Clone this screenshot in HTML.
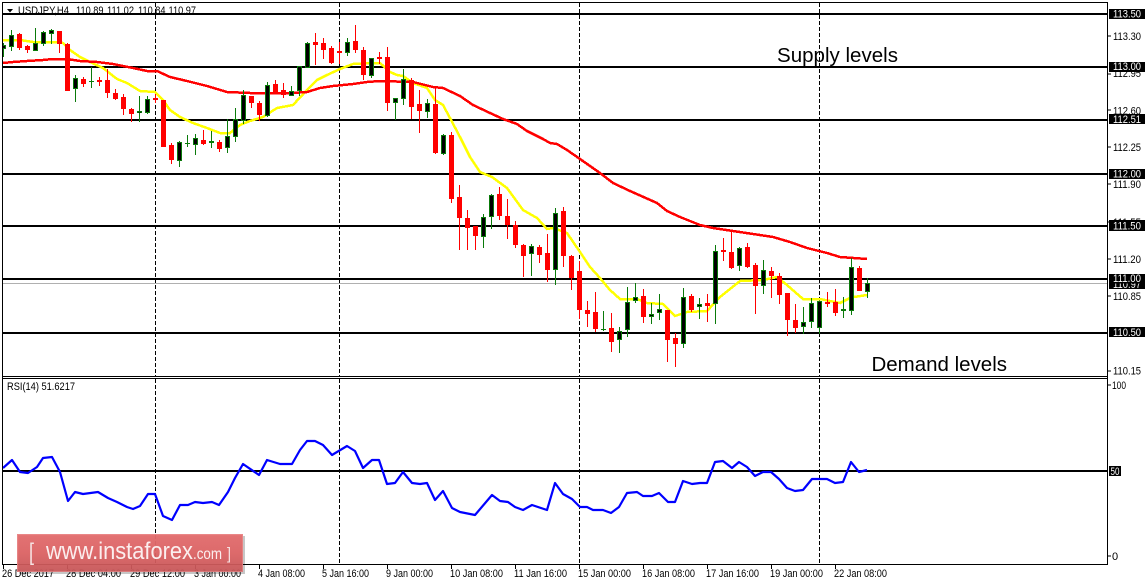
<!DOCTYPE html>
<html><head><meta charset="utf-8"><title>USDJPY,H4</title>
<style>
html,body{margin:0;padding:0;background:#fff;width:1147px;height:585px;overflow:hidden}
svg{display:block}
text{font-family:"Liberation Sans",sans-serif;fill:#000}
.a{font-size:11px}
.w{font-size:11px;fill:#fff}
</style></head><body>
<svg width="1147" height="585" viewBox="0 0 1147 585" xmlns="http://www.w3.org/2000/svg">
<defs>
<clipPath id="c"><rect x="3" y="3" width="1104" height="373"/></clipPath>
<linearGradient id="g" x1="0" y1="0" x2="0" y2="1"><stop offset="0" stop-color="#e46f70" stop-opacity=".96"/><stop offset=".5" stop-color="#de6465" stop-opacity=".94"/><stop offset="1" stop-color="#c95658" stop-opacity=".92"/></linearGradient>
</defs>
<rect width="1147" height="585" fill="#fff"/>

<!-- header -->
<path d="M7 9H13L10 12.5Z" fill="#000"/>
<text x="18" y="14" class="a" textLength="51" lengthAdjust="spacingAndGlyphs">USDJPY,H4</text>
<text x="76" y="14" class="a" textLength="27.5" lengthAdjust="spacingAndGlyphs">110.89</text>
<text x="107" y="14" class="a" textLength="27" lengthAdjust="spacingAndGlyphs">111.02</text>
<text x="138" y="14" class="a" textLength="27.5" lengthAdjust="spacingAndGlyphs">110.84</text>
<text x="168.500" y="14" class="a" textLength="27.500" lengthAdjust="spacingAndGlyphs">110.97</text>

<!-- grid dashes -->
<g shape-rendering="crispEdges">
<path d="M155.5 3V376M339.5 3V376M579.5 3V376M819.5 3V376M155.5 379V564M339.5 379V564M579.5 379V564M819.5 379V564" stroke="#000" stroke-width="1" stroke-dasharray="4 2" fill="none"/>
<!-- levels -->
<path d="M3 283.5H1107" stroke="#b0b0b0" stroke-width="1"/>
<path d="M3 14H1107M3 67H1107M3 120H1107M3 174H1107M3 226H1107M3 279H1107M3 333H1107M3 471H1107" stroke="#000" stroke-width="2"/>
</g>

<g clip-path="url(#c)" shape-rendering="crispEdges" fill="none">
<!-- MAs -->
<polyline stroke="#ffff00" stroke-width="2.5" points="3,40 20,40 33,42 60,42 63,43 70,50 80,57 90,62 103,68 117,79 127,83 140,91 155,92 163,100 170,110 180,117 193,123 207,128 220,133 230,133 240,125 250,121 263,117 277,108 293,105 307,90 317,80 327,75 340,69 353,64 370,63 380,63 390,72 397,75 403,76 413,83 427,88 435,100 443,105 450,118 460,137 470,157 480,172 492,177 507,188 523,210 537,218 547,229 553,228 567,233 580,252 590,267 600,278 610,290 620,299 637,299 647,303 663,304 675,316 687,312 707,311 720,297 730,289 740,281 763,280 777,277 787,285 803,299 820,299 840,303 850,298 854,297 867,295"/>
<polyline stroke="#ff0000" stroke-width="2.5" points="3,63 13,62 27,61 43,60 53,59 67,59 80,61 97,62 113,64 123,66 133,68 147,71 157,71 170,77 187,81 207,86 227,92 250,93 267,93 293,93 307,92 320,88 333,86 353,84 367,82 380,81 413,82 433,87 443,88 460,96 473,105 490,113 503,119 517,124 527,131 543,139 550,143 557,144 567,150 580,159 600,173 613,183 630,191 657,203 667,211 680,217 700,225 713,228 733,231 753,234 773,237 790,242 807,248 827,253 840,257 867,259"/>
<!-- red wicks -->
<path stroke="#ff0000" stroke-width="1" d="M19.5 33V50M27.5 45V53M59.5 31V53M67.5 43V91M83.5 77V87M99.5 77V86M107.5 69V98M115.5 89V100M123.5 94V115M131.5 108V122M155.5 94V103M163.5 100V147M171.5 143V164M203.5 130V145M219.5 140V152M251.5 96V108M259.5 101V121M275.5 80V94M283.5 83V98M315.5 33V65M323.5 38V59M331.5 46V64M339.5 42V64M355.5 25V53M363.5 47V80M379.5 52V64M387.5 47V111M411.5 78V119M419.5 90V133M435.5 87V154M451.5 132V203M459.5 185V250M467.5 210V250M475.5 226V250M499.5 187V220M507.5 199V239M515.5 221V248M523.5 244V277M539.5 245V263M547.5 234V282M563.5 207V267M571.5 255V290M579.5 261V319M587.5 301V327M595.5 292V332M611.5 313V352M643.5 289V323M667.5 310V362M675.5 333V367M691.5 294V312M707.5 294V322M723.5 238V261M731.5 230V269M747.5 243V268M755.5 263V314M771.5 267V298M779.5 273V304M787.5 293V336M795.5 304V333M827.5 292V307M835.5 289V316M859.5 266V291"/>
<!-- red bodies -->
<path stroke="#ff0000" stroke-width="5" d="M19.5 34V48M27.5 46V50M59.5 31V44M67.5 44V91M83.5 79V84M99.5 80V82M107.5 80V93M115.5 93V99M123.5 97V109M131.5 109V114M155.5 98V100M163.5 100V147M171.5 145V160M203.5 140V144M219.5 142V149M251.5 96V103M259.5 103V115M275.5 84V93M283.5 90V95M315.5 42V45M323.5 43V50M331.5 48V63M339.5 51V53M355.5 41V50M363.5 50V75M379.5 57V59M387.5 57V103M411.5 80V107M419.5 104V111M435.5 104V153M451.5 135V199M459.5 197V218M467.5 218V228M475.5 226V236M499.5 194V216M507.5 216V225M515.5 225V245M523.5 245V256M539.5 247V255M547.5 253V270M563.5 211V256M571.5 256V278M579.5 271V310M587.5 310V314M595.5 312V329M611.5 328V342M643.5 296V317M667.5 310V340M675.5 338V344M691.5 296V310M707.5 303V306M723.5 250V252M731.5 252V268M747.5 247V267M755.5 265V286M771.5 271V276M779.5 276V295M787.5 293V320M795.5 320V328M827.5 302V304M835.5 302V313M859.5 268V291"/>
<!-- green wicks -->
<path stroke="#0a7a0a" stroke-width="1" d="M3.5 43V57M11.5 30V51M35.5 28V51M43.5 31V46M51.5 29V44M75.5 75V102M91.5 67V88M139.5 96V122M147.5 96V114M179.5 141V167M187.5 135V147M195.5 134V155M211.5 131V148M227.5 119V153M235.5 108V142M243.5 90V124M267.5 82V117M291.5 86V96M299.5 66V96M307.5 42V68M347.5 38V56M371.5 58V78M395.5 98V120M403.5 69V105M427.5 99V118M443.5 134V155M483.5 214V248M491.5 194V229M531.5 244V276M555.5 208V285M603.5 311V331M619.5 327V353M627.5 287V337M635.5 283V303M651.5 303V324M659.5 294V320M683.5 288V348M699.5 298V319M715.5 245V324M739.5 247V271M763.5 260V294M803.5 307V334M811.5 298V328M819.5 301V334M843.5 297V318M851.5 258V315M867.5 278V298"/>
<!-- green body outlines -->
<path stroke="#0a7a0a" stroke-width="5" d="M3.5 45V49M11.5 35V47M35.5 43V51M43.5 32V44M51.5 30V34M75.5 78V89M91.5 81V82M139.5 111V113M147.5 99V113M179.5 142V161M187.5 143V144M195.5 138V145M211.5 141V143M227.5 136V148M235.5 119V137M243.5 95V121M267.5 85V116M291.5 91V96M299.5 66V91M307.5 43V68M347.5 42V53M371.5 58V76M395.5 98V103M403.5 79V99M427.5 103V112M443.5 135V154M483.5 217V237M491.5 195V217M531.5 246V254M555.5 213V270M603.5 329V330M619.5 331V340M627.5 302V330M635.5 297V301M651.5 314V317M659.5 309V313M683.5 297V344M699.5 304V307M715.5 251V304M739.5 248V266M763.5 270V286M803.5 322V327M811.5 303V322M819.5 301V328M843.5 309V311M851.5 267V311M867.5 283V292"/>
<!-- black body fill -->
<path stroke="#000" stroke-width="3" d="M3.5 46V48M11.5 36V46M35.5 44V50M43.5 33V43M51.5 31V33M75.5 79V88M139.5 112V112.5M147.5 100V112M179.5 143V160M195.5 139V144M227.5 137V147M235.5 120V136M243.5 96V120M267.5 86V115M291.5 92V95M299.5 67V90M307.5 44V67M347.5 43V52M371.5 59V75M395.5 99V102M403.5 80V98M427.5 104V111M443.5 136V153M483.5 218V236M491.5 196V216M531.5 247V253M555.5 214V269M619.5 332V339M627.5 303V329M635.5 298V300M651.5 315V316M659.5 310V312M683.5 298V343M699.5 305V306M715.5 252V303M739.5 249V265M763.5 271V285M803.5 323V326M811.5 304V321M819.5 302V327M851.5 268V310M867.5 284V291"/>
</g>

<!-- RSI -->
<polyline fill="none" stroke="#0000ff" stroke-width="2.2" stroke-linejoin="round" points="3,468 12,460 20,472 28,473 37,467 43,458 52,457 60,472 68,501 75,492 83,494 98,492 108,498 117,502 127,507 133,509 140,506 148,494 155,494 163,516 172,520 180,505 188,505 195,502 203,503 212,502 219,505 228,492 235,478 243,464 259,475 267,460 280,464 292,464 300,450 307,441 315,441 323,445 332,455 347,446 355,451 363,468 372,460 379,460 387,484 395,483 403,472 412,483 420,484 427,483 435,500 443,491 452,508 460,512 475,515 492,495 500,501 508,502 515,507 523,510 532,505 547,510 555,483 563,494 572,499 580,507 587,507 593,510 603,510 611,513 619,507 627,493 637,492 643,496 652,496 659,493 668,502 675,502 683,481 692,484 700,483 707,483 715,462 723,461 732,468 739,462 747,467 755,476 763,472 771,472 779,479 787,488 795,491 803,490 812,479 827,479 835,483 843,482 851,462 859,472 867,470"/>
<text x="7" y="390" class="a" textLength="68" lengthAdjust="spacingAndGlyphs">RSI(14) 51.6217</text>

<!-- frames -->
<g shape-rendering="crispEdges" fill="none" stroke="#000" stroke-width="1">
<path d="M2.5 2.5H1107.5V564.5H2.5Z"/>
<path d="M2.5 376.5H1107.5M2.5 378.5H1107.5"/>
<!-- right ticks -->
<path d="M1108 36H1111M1108 74H1111M1108 110H1111M1108 147H1111M1108 184H1111M1108 222H1111M1108 259H1111M1108 296H1111M1108 371H1111M1108 385H1111M1108 556H1111"/>
<!-- bottom ticks -->
<path d="M3.5 565V569M67.5 565V569M131.5 565V569M195.5 565V569M259.5 565V569M323.5 565V569M387.5 565V569M451.5 565V569M515.5 565V569M579.5 565V569M643.5 565V569M707.5 565V569M771.5 565V569M835.5 565V569"/>
</g>

<!-- right axis -->
<text class="a" x="1113" y="40" textLength="28" lengthAdjust="spacingAndGlyphs">113.30</text>
<text class="a" x="1113" y="77" textLength="28" lengthAdjust="spacingAndGlyphs">112.95</text>
<text class="a" x="1113" y="114.5" textLength="28" lengthAdjust="spacingAndGlyphs">112.60</text>
<text class="a" x="1113" y="151" textLength="28" lengthAdjust="spacingAndGlyphs">112.25</text>
<text class="a" x="1113" y="188" textLength="28" lengthAdjust="spacingAndGlyphs">111.90</text>
<text class="a" x="1113" y="226" textLength="28" lengthAdjust="spacingAndGlyphs">111.55</text>
<text class="a" x="1113" y="263" textLength="28" lengthAdjust="spacingAndGlyphs">111.20</text>
<text class="a" x="1113" y="300" textLength="28" lengthAdjust="spacingAndGlyphs">110.85</text>
<text class="a" x="1113" y="374.5" textLength="28" lengthAdjust="spacingAndGlyphs">110.15</text>
<text class="a" x="1112" y="389" textLength="14" lengthAdjust="spacingAndGlyphs">100</text>
<text class="a" x="1112" y="560">0</text>
<g shape-rendering="crispEdges" fill="#000">
<rect x="1109" y="9" width="36" height="10"/>
<rect x="1109" y="62" width="36" height="10"/>
<rect x="1109" y="114" width="36" height="10"/>
<rect x="1109" y="169" width="36" height="10"/>
<rect x="1109" y="220" width="36" height="11"/>
<rect x="1109" y="278" width="36" height="11"/>
<rect x="1109" y="327" width="36" height="10"/>
<rect x="1109" y="466" width="12" height="10"/>
</g>
<text class="w" x="1113" y="17.5" textLength="28" lengthAdjust="spacingAndGlyphs">113.50</text>
<text class="w" x="1113" y="70" textLength="28" lengthAdjust="spacingAndGlyphs">113.00</text>
<text class="w" x="1113" y="123" textLength="28" lengthAdjust="spacingAndGlyphs">112.51</text>
<text class="w" x="1113" y="177.5" textLength="28" lengthAdjust="spacingAndGlyphs">112.00</text>
<text class="w" x="1113" y="229.5" textLength="28" lengthAdjust="spacingAndGlyphs">111.50</text>
<text class="w" x="1113" y="288" textLength="28" lengthAdjust="spacingAndGlyphs">110.97</text>
<rect x="1109" y="274" width="36" height="9.500" fill="#000"/>
<text class="w" x="1113" y="282" textLength="28" lengthAdjust="spacingAndGlyphs">111.00</text>
<text class="w" x="1113" y="336" textLength="28" lengthAdjust="spacingAndGlyphs">110.50</text>
<text class="w" x="1110.5" y="475" textLength="9" lengthAdjust="spacingAndGlyphs">50</text>

<!-- date axis -->
<text class="a" x="2" y="577" textLength="52" lengthAdjust="spacingAndGlyphs">26 Dec 2017</text>
<text class="a" x="66" y="577" textLength="55" lengthAdjust="spacingAndGlyphs">28 Dec 04:00</text>
<text class="a" x="130" y="577" textLength="55" lengthAdjust="spacingAndGlyphs">29 Dec 12:00</text>
<text class="a" x="194" y="577" textLength="47" lengthAdjust="spacingAndGlyphs">3 Jan 00:00</text>
<text class="a" x="258" y="577" textLength="47" lengthAdjust="spacingAndGlyphs">4 Jan 08:00</text>
<text class="a" x="322" y="577" textLength="47" lengthAdjust="spacingAndGlyphs">5 Jan 16:00</text>
<text class="a" x="386" y="577" textLength="47" lengthAdjust="spacingAndGlyphs">9 Jan 00:00</text>
<text class="a" x="450" y="577" textLength="53" lengthAdjust="spacingAndGlyphs">10 Jan 08:00</text>
<text class="a" x="514" y="577" textLength="53" lengthAdjust="spacingAndGlyphs">11 Jan 16:00</text>
<text class="a" x="578" y="577" textLength="53" lengthAdjust="spacingAndGlyphs">15 Jan 00:00</text>
<text class="a" x="642" y="577" textLength="53" lengthAdjust="spacingAndGlyphs">16 Jan 08:00</text>
<text class="a" x="706" y="577" textLength="53" lengthAdjust="spacingAndGlyphs">17 Jan 16:00</text>
<text class="a" x="770" y="577" textLength="53" lengthAdjust="spacingAndGlyphs">19 Jan 00:00</text>
<text class="a" x="834" y="577" textLength="53" lengthAdjust="spacingAndGlyphs">22 Jan 08:00</text>

<!-- annotations -->
<text x="777" y="62" textLength="121" lengthAdjust="spacingAndGlyphs" style="font-size:20.5px">Supply levels</text>
<text x="871.5" y="371" textLength="135.5" lengthAdjust="spacingAndGlyphs" style="font-size:20.5px">Demand levels</text>

<!-- watermark -->
<rect x="19" y="536" width="226" height="38" fill="#000" opacity=".22"/>
<rect x="17" y="534" width="226" height="38" fill="url(#g)"/>
<rect x="17.5" y="534.5" width="225" height="37" fill="none" stroke="#ee9a9a" stroke-width="1" opacity=".5"/>
<text x="29" y="560" style="font-size:24px;fill:#f6e2e2" textLength="5" lengthAdjust="spacingAndGlyphs">[</text>
<text x="46" y="559" style="font-size:24.5px;fill:#fbeeee" textLength="147" lengthAdjust="spacingAndGlyphs">www.instaforex</text>
<text x="193" y="559" style="font-size:16px;fill:#fbeeee" textLength="29" lengthAdjust="spacingAndGlyphs">.com</text>
<text x="227" y="559" style="font-size:17px;fill:#f6e2e2" textLength="4" lengthAdjust="spacingAndGlyphs">]</text>
</svg>
</body></html>
